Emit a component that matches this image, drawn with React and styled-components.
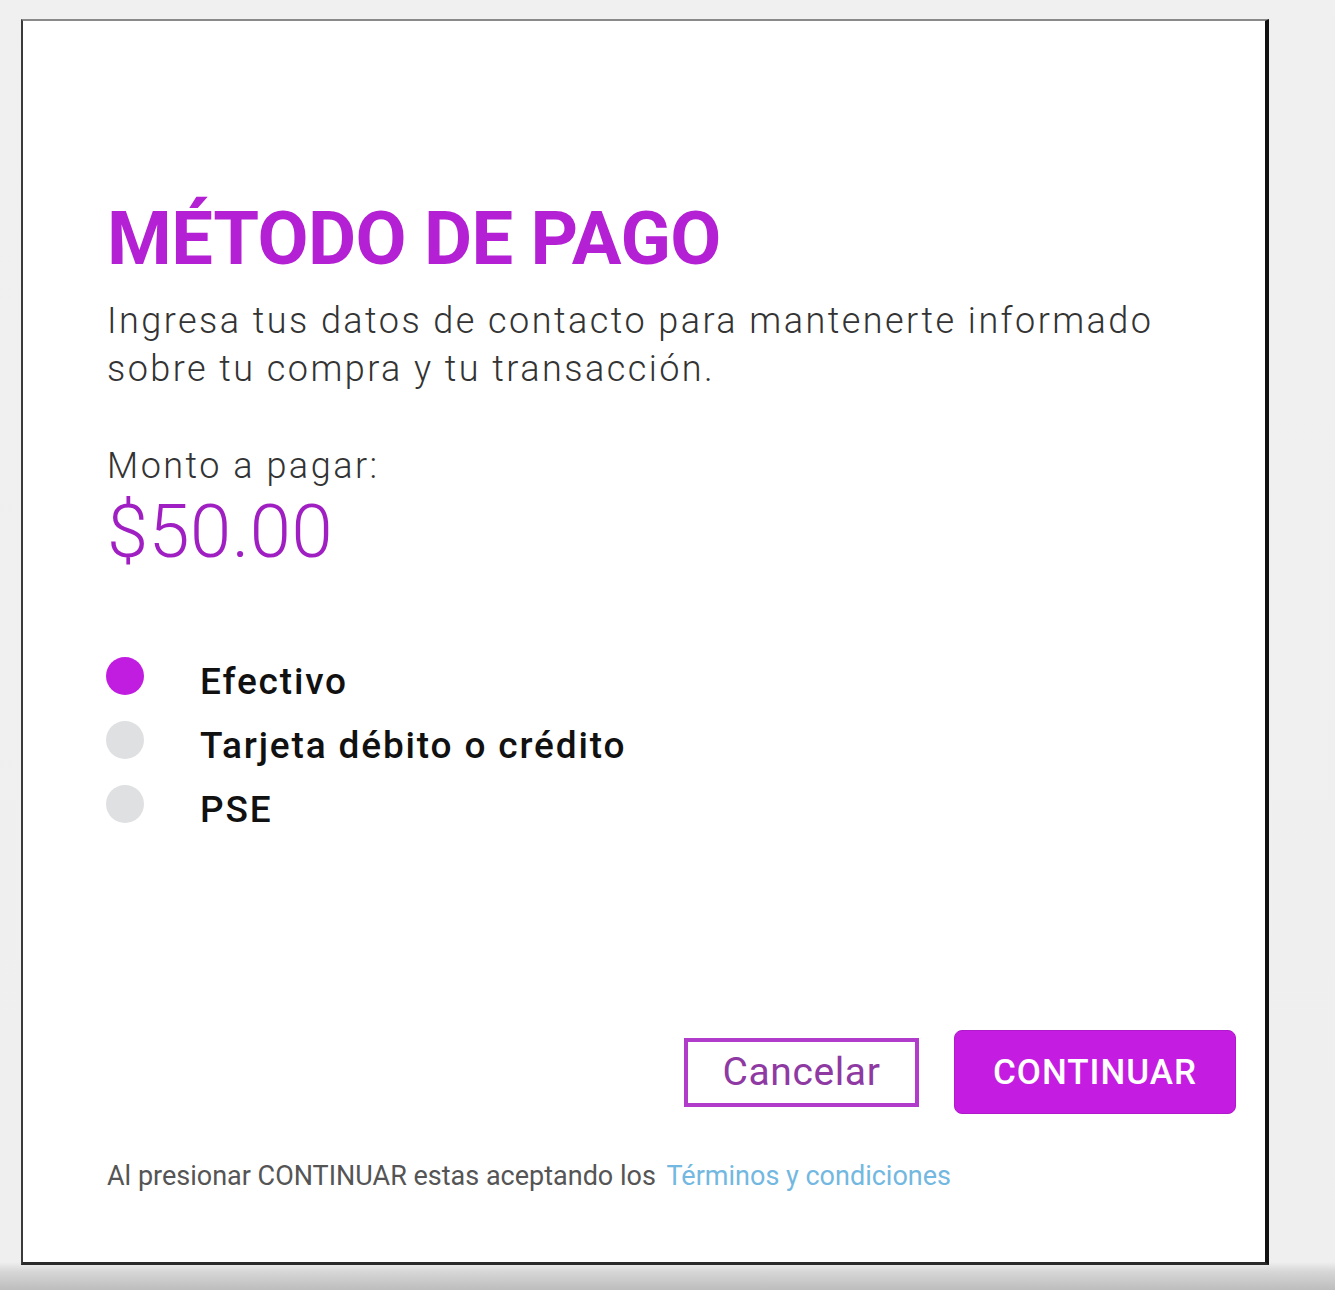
import React, { useState } from 'react';
import styled, { createGlobalStyle } from 'styled-components';

const GlobalStyle = createGlobalStyle`
  html, body {
    margin: 0;
    padding: 0;
  }

  body {
    width: 1335px;
    height: 1290px;
    overflow: hidden;
    background: linear-gradient(to bottom, #f0f0f0 0, #efefef 1262px, #d6d6d6 1272px, #bdbdbd 1290px);
    font-family: Roboto, "Liberation Sans", Arial, sans-serif;
  }
`;

const Page = styled.div`
  padding: 19px 0 0 21px;
`;

const Card = styled.div`
  box-sizing: border-box;
  width: 1248px;
  height: 1246px;
  background: #fff;
  border: 2px solid #3a3a3a;
  border-top-color: #8a8a8a;
  border-right: 4px solid #111;
  border-bottom: 3px solid #2a2a2a;
  padding: 181px 29px 70px 84px;
  display: flex;
  flex-direction: column;
`;

const Title = styled.h1`
  margin: 0;
  font-size: 74px;
  line-height: 1;
  font-weight: 700;
  color: #b420d4;
  letter-spacing: -0.5px;
`;

const Lead = styled.p`
  margin: 21px 0 0;
  font-size: 36px;
  line-height: 48px;
  font-weight: 300;
  letter-spacing: 2.45px;
  color: #333;
`;

const AmountLabel = styled.div`
  margin-top: 49px;
  font-size: 36px;
  line-height: 48px;
  font-weight: 300;
  letter-spacing: 2.5px;
  color: #333;
`;

const Amount = styled.div`
  margin-top: 5px;
  font-size: 74px;
  line-height: 1;
  font-weight: 300;
  letter-spacing: 0.5px;
  color: #a01fc2;
`;

const Options = styled.ul`
  list-style: none;
  margin: 75px 0 0;
  padding: 0;
`;

const Option = styled.li`
  display: flex;
  align-items: center;
  height: 64px;
  cursor: pointer;
`;

const Dot = styled.span`
  flex: none;
  width: 38px;
  height: 38px;
  border-radius: 50%;
  margin-left: -1px;
  background: ${p => (p.$active ? '#c11de0' : '#dfe0e1')};
`;

const OptionLabel = styled.span`
  margin-left: 56px;
  padding-top: 10px;
  font-size: 37px;
  font-weight: 500;
  letter-spacing: 1.85px;
  color: #111;
`;

const Actions = styled.div`
  margin-top: auto;
  display: flex;
  justify-content: flex-end;
  align-items: center;
  gap: 35px;
`;

const OutlineButton = styled.button`
  box-sizing: border-box;
  width: 235px;
  height: 69px;
  background: #fff;
  border: 4px solid #b13ccc;
  border-radius: 0;
  font-family: inherit;
  font-size: 39px;
  font-weight: 400;
  letter-spacing: 0.6px;
  color: #8f3aa3;
  cursor: pointer;
`;

const PrimaryButton = styled.button`
  box-sizing: border-box;
  width: 282px;
  height: 84px;
  background: #c41ce0;
  border: 1px solid #b018cc;
  border-radius: 8px;
  font-family: inherit;
  font-size: 35px;
  font-weight: 500;
  letter-spacing: 1px;
  color: #fff;
  cursor: pointer;
`;

const Terms = styled.p`
  margin: 47px 0 0;
  font-size: 27px;
  line-height: 31px;
  font-weight: 400;
  color: #555;

  a {
    margin-left: 4px;
    color: #72b8e0;
    text-decoration: none;
  }
`;

const methods = ['Efectivo', 'Tarjeta débito o crédito', 'PSE'];

export default () => {
  const [method, setMethod] = useState(0);

  return <Page>
    <GlobalStyle />
    <Card>
      <Title>MÉTODO DE PAGO</Title>
      <Lead>
        Ingresa tus datos de contacto para mantenerte informado<br />
        sobre tu compra y tu transacción.
      </Lead>
      <AmountLabel>Monto a pagar:</AmountLabel>
      <Amount>$50.00</Amount>
      <Options>
        {
          methods.map((name, i) => (
            <Option key={ name } onClick={ () => setMethod(i) }>
              <Dot $active={ method === i } />
              <OptionLabel>{ name }</OptionLabel>
            </Option>
          ))
        }
      </Options>
      <Actions>
        <OutlineButton>Cancelar</OutlineButton>
        <PrimaryButton>CONTINUAR</PrimaryButton>
      </Actions>
      <Terms>
        Al presionar CONTINUAR estas aceptando los{' '}<a href="#">Términos y condiciones</a>
      </Terms>
    </Card>
  </Page>
}
